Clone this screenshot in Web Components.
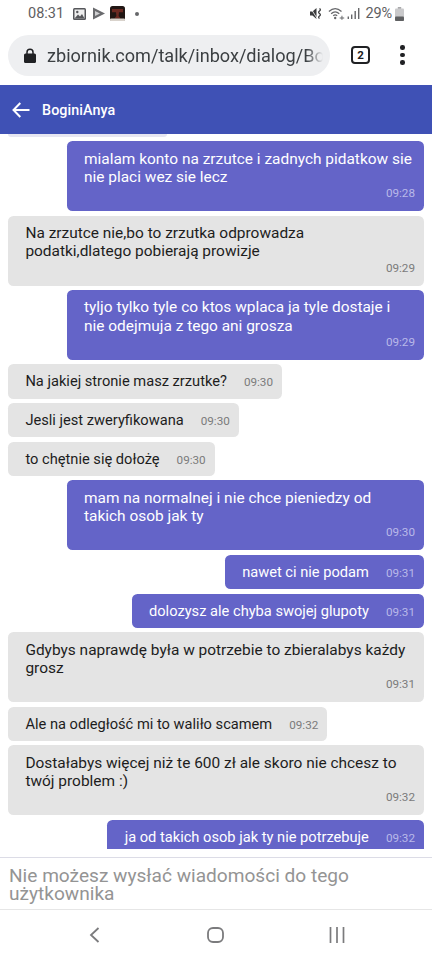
<!DOCTYPE html>
<html lang="pl"><head><meta charset="utf-8">
<style>
html,body{margin:0;padding:0;background:#fff;font-family:Roboto,"Noto Sans",sans-serif}
body{width:432px;height:960px;overflow:hidden}
app-shell{height:960px}
</style></head>
<body>
<app-shell>
  <status-bar slot="status"></status-bar>
  <browser-bar slot="browser" url="zbiornik.com/talk/inbox/dialog/Bo" tabs="2"></browser-bar>
  <chat-header slot="header" name="BoginiAnya"></chat-header>
  <chat-list slot="list">
    <chat-msg side="out" time="09:28" stacked w="357">mialam konto na zrzutce i zadnych pidatkow sie<br>nie placi wez sie lecz</chat-msg>
    <chat-msg side="in" time="09:29" stacked w="416">Na zrzutce nie,bo to zrzutka odprowadza<br>podatki,dlatego pobierają prowizje</chat-msg>
    <chat-msg side="out" time="09:29" stacked w="357">tyljo tylko tyle co ktos wplaca ja tyle dostaje i<br>nie odejmuja z tego ani grosza</chat-msg>
    <chat-msg side="in" time="09:30">Na jakiej stronie masz zrzutke?</chat-msg>
    <chat-msg side="in" time="09:30">Jesli jest zweryfikowana</chat-msg>
    <chat-msg side="in" time="09:30">to chętnie się dołożę</chat-msg>
    <chat-msg side="out" time="09:30" stacked w="357">mam na normalnej i nie chce pieniedzy od<br>takich osob jak ty</chat-msg>
    <chat-msg side="out" time="09:31">nawet ci nie podam</chat-msg>
    <chat-msg side="out" time="09:31">dolozysz ale chyba swojej glupoty</chat-msg>
    <chat-msg side="in" time="09:31" stacked w="416">Gdybys naprawdę była w potrzebie to zbieralabys każdy<br>grosz</chat-msg>
    <chat-msg side="in" time="09:32">Ale na odległość mi to waliło scamem</chat-msg>
    <chat-msg side="in" time="09:32" stacked w="416">Dostałabys więcej niż te 600 zł ale skoro nie chcesz to<br>twój problem :)</chat-msg>
    <chat-msg side="out" time="09:32">ja od takich osob jak ty nie potrzebuje</chat-msg>
  </chat-list>
  <chat-notice slot="notice">Nie możesz wysłać wiadomości do tego użytkownika</chat-notice>
  <nav-bar slot="nav"></nav-bar>
</app-shell>
<script>
function def(name, css, html){
  customElements.define(name, class extends HTMLElement{
    connectedCallback(){
      if(this.shadowRoot) return;
      const r=this.attachShadow({mode:'open'});
      r.innerHTML='<style>'+css+'</style>'+(typeof html==='function'?html(this):html);
    }
  });
}
def('app-shell',`:host{display:flex;flex-direction:column;width:432px;overflow:hidden;background:#fff}`,
 `<slot name="status"></slot><slot name="browser"></slot><slot name="header"></slot><slot name="list"></slot><slot name="notice"></slot><slot name="nav"></slot>`);

def('status-bar',`:host{display:flex;align-items:center;height:27px;padding:0 28px;width:432px;box-sizing:border-box;justify-content:space-between;color:#5f6062;font:14.5px Roboto,sans-serif;flex:none}
 .g{display:flex;align-items:center} svg{display:block;flex:none}`,
 `<div class="g"><span style="width:43px">08:31</span>
  <svg style="margin-left:2px" width="13" height="12" viewBox="0 0 13 12"><rect width="13" height="12" rx="1.5" fill="#55565a"/><rect x="1.500" y="1.500" width="10" height="9" fill="#eee"/><circle cx="4.300" cy="4" r="1.200" fill="#55565a"/><path d="M1.500 10.500 5 6.500l2 2 2-2.500 2.500 4.500z" fill="#55565a"/></svg>
  <svg style="margin-left:7px" width="12" height="13" viewBox="0 0 12 13"><path d="M0 .5 12 6.500 0 12.500z" fill="#6a6b6e"/><path d="M2 4 2 9 7 6.500z" fill="#cfcfd1"/></svg>
  <svg style="margin-left:5px" width="15" height="15" viewBox="0 0 15 15"><rect width="15" height="15" rx="2.500" fill="#211714"/><path d="M2 3h11v3.200H9L8.600 10l2 2.500H4.400L6.400 10 6 6.200H2z" fill="#6b2a22"/><rect y="12.500" width="15" height="2.500" rx="1" fill="#d9d3cc"/></svg>
  <span style="margin-left:10px;width:4px;height:4px;border-radius:50%;background:#66676a"></span></div>
  <div class="g">
  <svg width="13" height="13" viewBox="0 0 13 13"><path d="M0 4.500h2.500L6.500 1v11L2.500 8.500H0z" fill="#3a3b3d"/><path d="M.5 1 7.500 12" stroke="#fff" stroke-width=".8"/><path d="M9.500 1.500q1.800 1.200 0 2.500t0 2.500q1.800 1.200 0 2.500t0 2.500" stroke="#3a3b3d" stroke-width="1.200" fill="none"/></svg>
  <svg style="margin-left:5px" width="18" height="13" viewBox="0 0 20 14"><g fill="none" stroke="#66676a" stroke-width="1.400"><path d="M1 4.800Q8-1.500 15 4.800"/><path d="M3.500 7.300Q8 3 12.500 7.300"/><path d="M5.800 9.500Q8 7.500 10.200 9.500"/></g><circle cx="8" cy="12" r="1.300" fill="#66676a"/><path d="M13 12h5M15.500 9.500v4.500" stroke="#66676a" stroke-width="1.100"/></svg>
  <svg style="margin-left:1px" width="13" height="13" viewBox="0 0 13 13"><path d="M.6 9.500h1.400v2.500H.6zM4 7.500h1.400v4.500H4zM7.500 4h1.400v8H7.500zM11 1h1.400v11H11z" fill="#66676a"/></svg>
  <span style="margin-left:5px;letter-spacing:-.1px">29%</span>
  <svg style="margin-left:3px" width="9" height="14" viewBox="0 0 9 14"><rect x="2.800" width="3.400" height="2" fill="#a9a9ab"/><rect y="1.500" width="9" height="12.500" rx="1" fill="#c9c9cb"/><rect y="9.500" width="9" height="4.500" rx="1" fill="#5f6062"/></svg></div>`);

def('browser-bar',`:host{display:flex;align-items:center;height:58px;box-sizing:border-box;padding:7px 0 9px 8px;width:432px;flex:none}
 .pill{width:322px;height:41px;box-sizing:border-box;border-radius:21px;background:#eeeff1;display:flex;align-items:center;padding:0 7px 0 16px;overflow:hidden;flex:none}
 .u{font:18.100px Roboto,sans-serif;color:#3c4043;white-space:nowrap;flex:none;margin-left:11px;width:276px;-webkit-mask-image:linear-gradient(90deg,#000 94%,transparent 100%);mask-image:linear-gradient(90deg,#000 94%,transparent 100%)}
 .tabs{width:19px;height:18px;box-sizing:border-box;border:2.200px solid #202124;border-radius:4px;margin-left:21px;font:700 11.500px/14px Roboto,sans-serif;text-align:center;color:#202124;flex:none}
 .dots{margin-left:30px;display:flex;flex-direction:column;gap:3px} .dots i{display:block;width:4.500px;height:4.500px;border-radius:50%;background:#202124}`,
 e=>`<div class="pill"><svg width="12" height="15" viewBox="0 0 12 15" style="flex:none"><path d="M3 6.500V4.300a3 3 0 0 1 6 0v2.200" fill="none" stroke="#202124" stroke-width="1.500"/><rect y="5.500" width="12" height="9.500" rx="1.500" fill="#202124"/></svg><span class="u">${e.getAttribute('url')}</span></div><div class="tabs">${e.getAttribute('tabs')}</div><div class="dots"><i></i><i></i><i></i></div>`);

def('chat-header',`:host{display:flex;align-items:center;height:49px;background:#3f51b5;color:#fff;box-sizing:border-box;padding-left:12px;flex:none}
 b{font:500 14.300px Roboto,sans-serif;margin-left:12px;letter-spacing:.1px}`,
 e=>`<svg width="18" height="16" viewBox="0 0 18 16"><path d="M17.500 8H1.800M8.300 1 1.500 8l6.800 7" fill="none" stroke="#fff" stroke-width="2"/></svg><b>${e.getAttribute('name')}</b>`);

def('chat-list',`:host{display:flex;flex-direction:column;height:715px;overflow:hidden;box-sizing:border-box;padding:0 8px;gap:4.400px;flex:none}
 .prev{height:2.800px;width:159px;background:#e6e6f2;border-radius:0 0 6px 6px;flex:none}`,
 `<div class="prev"></div><slot></slot>`);

def('chat-msg',`:host{display:block;flex:none;box-sizing:border-box;border-radius:5.500px;font:15.450px/18.200px Roboto,sans-serif}
 :host([side=out]){align-self:flex-end;background:#6464c8;color:#fff;--t:#b9b9e8;--p:17px}
 :host([side=in]){align-self:flex-start;background:#e4e4e4;color:#1d1d1d;--t:#7b7b7b;--p:17.400px}
 .b{display:flex;align-items:baseline;gap:17px;padding:8px 9px 8px 17.400px;white-space:nowrap;font-size:14.650px;line-height:18.300px}
 .s{padding:8.500px 8.800px 8px var(--p);height:70px;box-sizing:border-box;position:relative}
 .t{font-size:11.700px;color:var(--t);line-height:14px}
 .s .t{position:absolute;right:9px;bottom:11px}`,
 e=>{ const time=e.getAttribute('time');
   if(e.hasAttribute('stacked')){ e.style.width=e.getAttribute('w')+'px'; return `<div class="s"><slot></slot><span class="t">${time}</span></div>`;}
   return `<div class="b"><span><slot></slot></span><span class="t">${time}</span></div>`; });

def('chat-notice',`:host{display:block;height:53px;box-sizing:border-box;border-top:1.300px solid #dcdce6;border-bottom:1.300px solid #e6e6e6;padding:8.500px 9px 0;font:19.100px/18.500px Roboto,sans-serif;color:#949494;background:#fff;margin-top:8px;flex:none}`,
 `<slot></slot>`);

def('nav-bar',`:host{display:flex;height:50px;align-items:center;flex:none;box-sizing:border-box;background:#fff;padding-left:88px}
 svg{display:block;flex:none}`,
 `<svg width="12" height="16" viewBox="0 0 12 16"><path d="M10.500 1 3 8l7.500 7" fill="none" stroke="#7b7b7d" stroke-width="1.800"/></svg>
  <svg style="margin-left:107px" width="17" height="16" viewBox="0 0 17 16"><rect x="1" y="1" width="15" height="14" rx="5" fill="none" stroke="#7b7b7d" stroke-width="1.800"/></svg>
  <svg style="margin-left:105px" width="16" height="16" viewBox="0 0 16 16"><path d="M1.500 0v16M8 0v16M14.500 0v16" stroke="#7b7b7d" stroke-width="1.700"/></svg>`);
</script>
</body></html>
